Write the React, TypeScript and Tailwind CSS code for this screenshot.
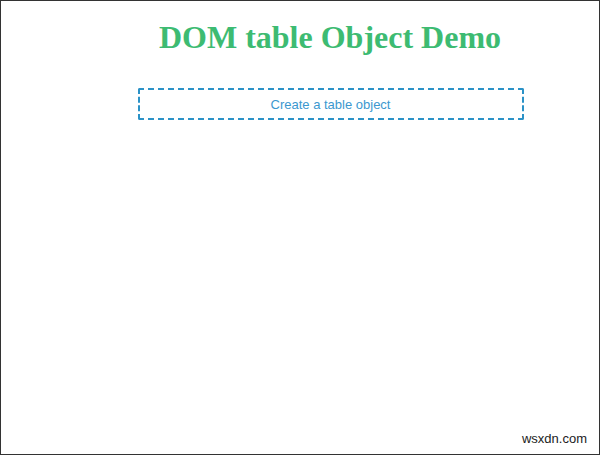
export default function App() {
  return (
    <div className="relative w-[600px] h-[455px] bg-white border border-[#333] box-border overflow-hidden">
      <div className="flex flex-col items-center pl-[60px]">
        <h1 className="mt-[18px] text-[32px] leading-[36px] font-bold text-[#3dbb72] font-['Liberation_Serif',serif]">
          DOM table Object Demo
        </h1>
        <div className="mt-[33px] ml-[1px] w-[386px] h-[32px] pt-[1px] border-2 border-dashed border-[#2b92c7] rounded-[2px] flex items-center justify-center text-[13px] text-[#3b98cf] font-['Liberation_Sans',Arial,sans-serif]">
          Create a table object
        </div>
      </div>
      <div className="absolute right-[10px] bottom-[6px] text-[13px] text-[#222] bg-white px-[2px] font-['Liberation_Sans',Arial,sans-serif]">
        wsxdn.com
      </div>
    </div>
  );
}
